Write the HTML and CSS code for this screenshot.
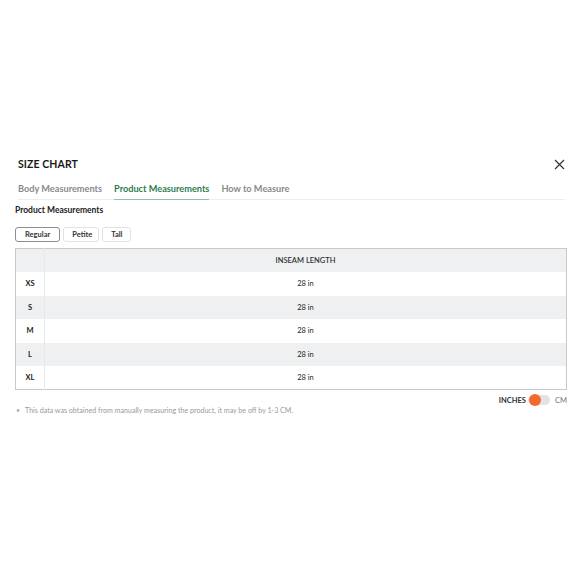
FILE: index.html
```html
<!DOCTYPE html>
<html>
<head>
<meta charset="utf-8">
<link rel="stylesheet" href="styles.css">
</head>
<body>
<div class="modal">
  <div class="head">
    <div class="title">SIZE CHART</div>
    <svg class="close" width="11" height="11" viewBox="0 0 11 11"><path d="M1 1L10 10M10 1L1 10" stroke="#333" stroke-width="1.2" fill="none"/></svg>
  </div>
  <div class="tabs">
    <span class="tab">Body Measurements</span>
    <span class="tab active">Product Measurements</span>
    <span class="tab">How to Measure</span>
  </div>
  <div class="sub">Product Measurements</div>
  <div class="fits">
    <span class="fit sel">Regular</span>
    <span class="fit">Petite</span>
    <span class="fit">Tall</span>
  </div>
  <table class="chart">
    <tr class="hd"><th class="sz"></th><th>INSEAM LENGTH</th></tr>
    <tr><td class="sz">XS</td><td>28 in</td></tr>
    <tr class="alt"><td class="sz">S</td><td>28 in</td></tr>
    <tr><td class="sz">M</td><td>28 in</td></tr>
    <tr class="alt"><td class="sz">L</td><td>28 in</td></tr>
    <tr><td class="sz">XL</td><td>28 in</td></tr>
  </table>
  <div class="units">
    <span>INCHES</span>
    <span class="toggle"><span class="knob"></span></span>
    <span class="cm">CM</span>
  </div>
  <ul class="note"><li>This data was obtained from manually measuring the product, it may be off by 1-3 CM.</li></ul>
</div>
</body>
</html>
```
FILE: styles.css
```css
* { box-sizing: border-box; }
body { margin: 0; background: #fff; font-family: "Lato", "Inter", sans-serif; color: #222; }
.modal { padding: 157px 13px 0 15px; }
.head { display: flex; justify-content: space-between; align-items: center; padding: 0 2px 0 3px; height: 14px; }
.title { font-size: 10.5px; font-weight: 700; color: #1a1a1a; letter-spacing: 0.1px; }
.close { display: block; }
.tabs { display: flex; gap: 12px; margin: 11px 2px 0 3px; border-bottom: 1px solid #eceef0; height: 18px; }
.tab { font-size: 9.2px; font-weight: 700; color: #8a8a8a; padding-top: 1px; height: 18px; }
.tab.active { color: #2e7d4f; border-bottom: 1.5px solid #8fc3a3; }
.sub { font-size: 8.5px; font-weight: 700; color: #222; margin-top: 5px; }
.fits { display: flex; gap: 3px; margin-top: 12px; }
.fit { font-size: 7.5px; font-weight: 700; color: #333; border: 1px solid #e2e2e2; border-radius: 3px; height: 15px; line-height: 13px; padding: 0 8px; }
.fit:first-child { padding: 0 9px; }
.fit.sel { border-color: #8e8e8e; }
.fit:nth-child(2) { padding: 0 8px; width: 36px; text-align: center; }
.fit:nth-child(3) { width: 29px; text-align: center; }
.chart { width: 552px; margin-top: 6px; border-collapse: collapse; border: 1px solid #c9c9c9; }
.chart th, .chart td { height: 23.5px; font-size: 7.5px; font-weight: 400; color: #222; text-align: center; padding: 0; }
.chart th { font-weight: 600; color: #333; }
.chart .sz { width: 29px; border-right: 1px solid #e6e8ea; font-weight: 700; }
.hd, .alt { background: #eef0f2; }
.units { display: flex; justify-content: flex-end; align-items: center; gap: 2px; margin-top: 5px; padding-right: 0; font-size: 7.5px; font-weight: 700; color: #333; }
.units .cm { color: #888; font-weight: 600; margin-left: 3px; }
.toggle { width: 22px; height: 10px; background: #e3e3e3; border-radius: 5px; position: relative; }
.knob { position: absolute; left: 1px; top: -1px; width: 12px; height: 12px; border-radius: 50%; background: #f26a2e; }
.note { margin: 0; padding: 0 0 0 10px; list-style: none; }
.note li { font-size: 7.1px; color: #9a9a9a; position: relative; margin-top: 1px; }
.note li::before { content: "•"; position: absolute; left: -9px; color: #b0b0b0; }
```
